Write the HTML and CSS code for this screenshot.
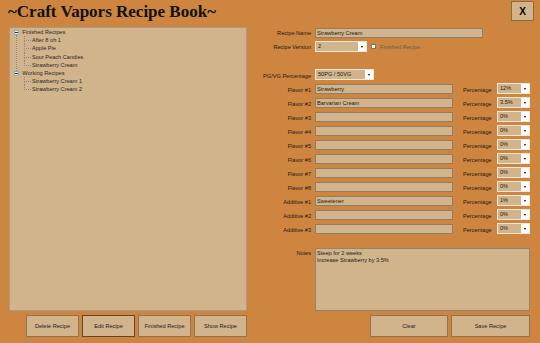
FILE: index.html
```html
<!DOCTYPE html>
<html lang="en">

<head>
    <meta charset="UTF-8" />
    <title>Craft Vapors Recipe Book</title>
    <link rel="stylesheet" href="styles.css">
</head>

<body>
    <header class="top">
        <h1>~Craft Vapors Recipe Book~</h1>
        <button type="button" class="close">X</button>
    </header>

    <div class="main">
        <div class="left">
            <div class="tree">
                <ul class="roots">
                    <li class="root">
                        <div class="node"><span class="exp"></span>Finished Recipes</div>
                        <ul class="kids">
                            <li class="kid">After 8 oh 1</li>
                            <li class="kid">Apple Pie</li>
                            <li class="kid">Sour Peach Candies</li>
                            <li class="kid">Strawberry Cream</li>
                        </ul>
                    </li>
                    <li class="root">
                        <div class="node"><span class="exp"></span>Working Recipes</div>
                        <ul class="kids">
                            <li class="kid">Strawberry Cream 1</li>
                            <li class="kid">Strawberry Cream 2</li>
                        </ul>
                    </li>
                </ul>
            </div>
            <div class="left-buttons">
                <button type="button" class="btn">Delete Recipe</button>
                <button type="button" class="btn focus">Edit Recipe</button>
                <button type="button" class="btn">Finished Recipe</button>
                <button type="button" class="btn">Show Recipe</button>
            </div>
        </div>

        <form class="recipe">
            <div class="row">
                <label>Recipe Name</label>
                <input class="text name" type="text" value="Strawberry Cream" />
            </div>
            <div class="row">
                <label>Recipe Version</label>
                <div class="combo ver"><span class="val">2</span><span class="drop"></span></div>
                <span class="box"></span>
                <span class="check-label">Finished Recipe</span>
            </div>

            <div class="row low spaced">
                <label>PG/VG Percentage</label>
                <div class="combo pg"><span class="val">50PG / 50VG</span><span class="drop"></span></div>
            </div>

            <div class="row low">
                <label>Flavor #1</label>
                <input class="text flavor" type="text" value="Strawberry" />
                <span class="pct-label">Percentage</span>
                <div class="combo pct"><span class="val">12%</span><span class="drop"></span></div>
            </div>
            <div class="row low">
                <label>Flavor #2</label>
                <input class="text flavor" type="text" value="Barvarian Cream" />
                <span class="pct-label">Percentage</span>
                <div class="combo pct"><span class="val">3.5%</span><span class="drop"></span></div>
            </div>
            <div class="row low">
                <label>Flavor #3</label>
                <input class="text flavor" type="text" value="" />
                <span class="pct-label">Percentage</span>
                <div class="combo pct"><span class="val">0%</span><span class="drop"></span></div>
            </div>
            <div class="row low">
                <label>Flavor #4</label>
                <input class="text flavor" type="text" value="" />
                <span class="pct-label">Percentage</span>
                <div class="combo pct"><span class="val">0%</span><span class="drop"></span></div>
            </div>
            <div class="row low">
                <label>Flavor #5</label>
                <input class="text flavor" type="text" value="" />
                <span class="pct-label">Percentage</span>
                <div class="combo pct"><span class="val">0%</span><span class="drop"></span></div>
            </div>
            <div class="row low">
                <label>Flavor #6</label>
                <input class="text flavor" type="text" value="" />
                <span class="pct-label">Percentage</span>
                <div class="combo pct"><span class="val">0%</span><span class="drop"></span></div>
            </div>
            <div class="row low">
                <label>Flavor #7</label>
                <input class="text flavor" type="text" value="" />
                <span class="pct-label">Percentage</span>
                <div class="combo pct"><span class="val">0%</span><span class="drop"></span></div>
            </div>
            <div class="row low">
                <label>Flavor #8</label>
                <input class="text flavor" type="text" value="" />
                <span class="pct-label">Percentage</span>
                <div class="combo pct"><span class="val">0%</span><span class="drop"></span></div>
            </div>
            <div class="row low">
                <label>Additive #1</label>
                <input class="text flavor" type="text" value="Sweetener" />
                <span class="pct-label">Percentage</span>
                <div class="combo pct"><span class="val">1%</span><span class="drop"></span></div>
            </div>
            <div class="row low">
                <label>Additive #2</label>
                <input class="text flavor" type="text" value="" />
                <span class="pct-label">Percentage</span>
                <div class="combo pct"><span class="val">0%</span><span class="drop"></span></div>
            </div>
            <div class="row low">
                <label>Additive #3</label>
                <input class="text flavor" type="text" value="" />
                <span class="pct-label">Percentage</span>
                <div class="combo pct"><span class="val">0%</span><span class="drop"></span></div>
            </div>

            <div class="row notes-row">
                <label>Notes</label>
                <textarea class="notes">Steep for 2 weeks
Increase Strawberry by 3.5%</textarea>
            </div>

            <div class="right-buttons">
                <button type="button" class="btn clear">Clear</button>
                <button type="button" class="btn save">Save Recipe</button>
            </div>
        </form>
    </div>
</body>

</html>
```

FILE: styles.css
```css
* {
    box-sizing: border-box;
}

html,
body {
    margin: 0;
    padding: 0;
}

body {
    width: 540px;
    height: 343px;
    overflow: hidden;
    background: #cd853f;
    font-family: "Liberation Sans", Arial, sans-serif;
    font-size: 5.6px;
    color: #1e1a16;
}

/* title bar */
.top {
    display: flex;
    justify-content: space-between;
    align-items: flex-start;
    height: 27px;
    padding: 1px 6px 0 8px;
}

h1 {
    margin: 1px 0 0;
    font: bold 17px/20px "Liberation Serif", serif;
    color: #111;
}

.close {
    width: 23px;
    height: 20px;
    padding: 0;
    background: #d2b48c;
    border: 1px solid #8b6b3f;
    font: bold 10px "Liberation Sans", Arial, sans-serif;
    color: #000;
}

.main {
    display: flex;
    gap: 8px;
    padding-left: 9px;
}

/* left side: tree + buttons */
.left {
    width: 238px;
    display: flex;
    flex-direction: column;
    gap: 4px;
}

.tree {
    height: 284px;
    background: #d2b48c;
    border: 1px solid #a89a86;
    color: #2a2520;
}

.tree ul {
    list-style: none;
    margin: 0;
    padding: 0;
}

.roots {
    padding-left: 4px !important;
}

.root {
    position: relative;
}

.root:not(:last-child)::after {
    content: "";
    position: absolute;
    left: 2px;
    top: 6.6px;
    bottom: -1.6px;
    border-left: 1px dotted #8a8a8a;
}

.node {
    display: flex;
    align-items: center;
    height: 8.2px;
    white-space: nowrap;
}

.exp {
    width: 5px;
    height: 5px;
    margin-right: 3.3px;
    border: 1px solid #98a4b8;
    background: #f2f2f2;
    display: flex;
    align-items: center;
    justify-content: center;
}

.exp::after {
    content: "";
    width: 3px;
    height: 1px;
    background: #333;
}

.kids {
    margin-left: 10px !important;
}

.kid {
    position: relative;
    height: 8.2px;
    line-height: 8.2px;
    padding-left: 8px;
    white-space: nowrap;
}

.kid::before {
    content: "";
    position: absolute;
    left: 0;
    top: 0;
    width: 6px;
    height: 4.1px;
    border-left: 1px dotted #8a8a8a;
    border-bottom: 1px dotted #8a8a8a;
}

.kid:not(:last-child)::after {
    content: "";
    position: absolute;
    left: 0;
    top: 4px;
    bottom: 0;
    border-left: 1px dotted #8a8a8a;
}

.left-buttons,
.right-buttons {
    display: flex;
    justify-content: flex-end;
    gap: 3px;
}

.btn {
    width: 53px;
    height: 22px;
    padding: 0;
    background: #d2b48c;
    border: 1px solid #8f7450;
    font-family: inherit;
    font-size: 5.6px;
    color: #222;
}

.btn.focus {
    border: 1.5px solid #5e472c;
}

/* right side: recipe form */
.recipe {
    width: 275px;
    margin: 0;
    display: flex;
    flex-direction: column;
    gap: 3px;
}

.row {
    display: flex;
    align-items: center;
    height: 11px;
}

.row label {
    width: 56px;
    margin-right: 4px;
    text-align: right;
    white-space: nowrap;
}

.row.low label,
.row.low .pct-label {
    align-self: flex-start;
    line-height: 11px;
    margin-top: 2px;
}

.spaced {
    margin-top: 14px;
}

.text {
    height: 10px;
    padding: 0 1px;
    border: 1px solid #8f7f6a;
    background: #d2b48c;
    font: inherit;
    color: #1e1a16;
    outline: none;
}

.name {
    width: 168px;
}

.flavor {
    width: 138px;
}

.combo {
    display: flex;
    height: 11px;
    border: 1px solid #f1e8d8;
    background: #d2b48c;
}

.combo .val {
    flex: 1;
    padding-left: 2px;
    line-height: 9px;
    white-space: nowrap;
}

.combo .drop {
    width: 8px;
    background: #fff;
    display: flex;
    align-items: center;
    justify-content: center;
}

.combo .drop::after {
    content: "";
    border-left: 1.5px solid transparent;
    border-right: 1.5px solid transparent;
    border-top: 2px solid #000;
}

.ver {
    width: 52px;
}

.pg {
    width: 59px;
}

.pct {
    width: 33px;
    margin-left: 5px;
}

.box {
    width: 5px;
    height: 5px;
    margin-left: 4px;
    border: 1px solid #777;
    background: #fff;
}

.check-label {
    margin-left: 4px;
    color: #6d5d4d;
}

.pct-label {
    width: 29px;
    margin-left: 10px;
    white-space: nowrap;
}

.notes-row {
    height: 63px;
    align-items: flex-start;
    margin-top: 11px;
}

.notes-row label {
    margin-top: 2px;
}

.notes {
    width: 215px;
    height: 63px;
    padding: 1px;
    margin: 0;
    resize: none;
    border: 1px solid #8f8470;
    background: #d2b48c;
    font: inherit;
    line-height: 7px;
    color: #1e1a16;
    outline: none;
}

.right-buttons {
    margin-top: 1px;
}

.clear {
    width: 78px;
}

.save {
    width: 79px;
}
```
